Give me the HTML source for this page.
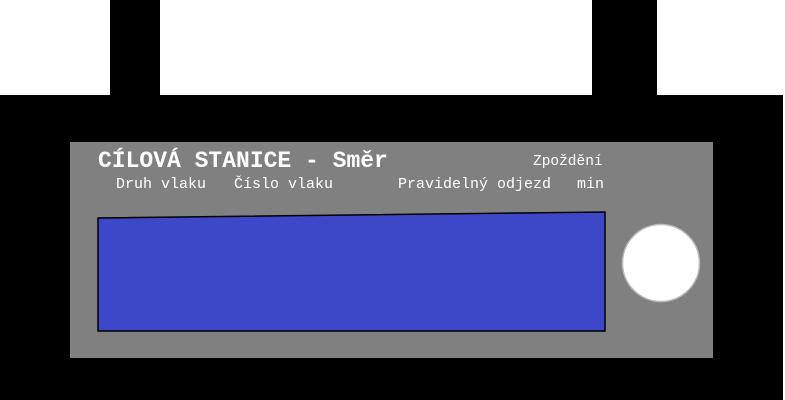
<!DOCTYPE html>
<html><head><style>
body{margin:0;width:785px;height:400px;background:#fff;position:relative;overflow:hidden;font-family:"Courier New","Liberation Mono",monospace;}
div{position:absolute}
.t{color:#fff;white-space:pre;font-size:15px;line-height:15px}
</style></head><body>
<div style="left:110px;top:0;width:50px;height:96px;background:#000"></div>
<div style="left:592px;top:0;width:65px;height:96px;background:#000"></div>
<div style="left:0;top:95px;width:783px;height:305px;background:#000"></div>
<div style="left:70px;top:142px;width:643px;height:216px;background:#808080"></div>
<svg style="position:absolute;left:0;top:0" width="785" height="400">
<polygon points="98,218 98,331 605,331 605,212" fill="#3d48c8" stroke="#000" stroke-width="1.5"/>
<circle cx="661" cy="263" r="38.5" fill="#fff" stroke="#bbb" stroke-width="1.5"/>
</svg>
<div class="t" style="left:98px;top:150px;font-size:23px;line-height:23px;font-weight:bold">CÍLOVÁ STANICE - Směr</div>
<div class="t" style="left:533px;top:155px;font-size:14.5px">Zpoždění</div>
<div class="t" style="left:116px;top:177px">Druh vlaku</div>
<div class="t" style="left:234px;top:177px">Číslo vlaku</div>
<div class="t" style="left:398px;top:177px">Pravidelný odjezd</div>
<div class="t" style="left:577px;top:177px">min</div>
</body></html>
